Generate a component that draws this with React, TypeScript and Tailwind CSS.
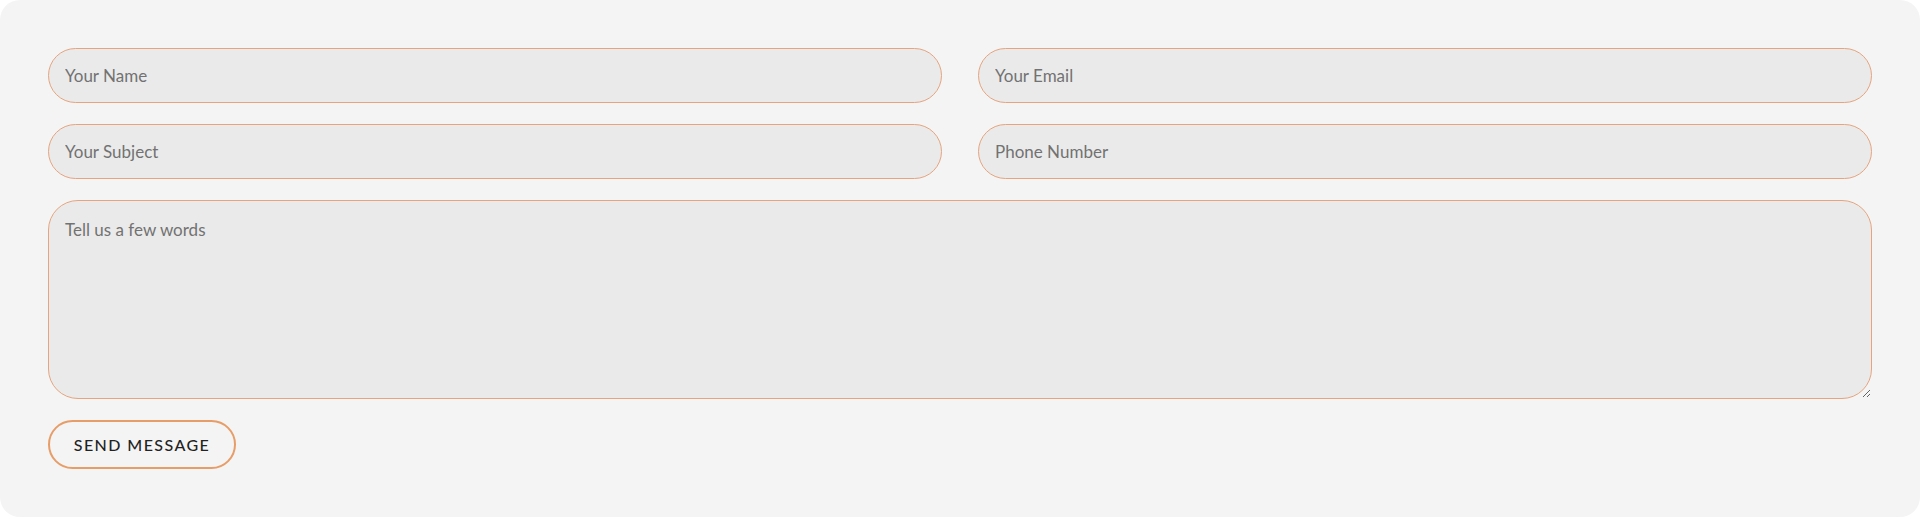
const fieldClass =
  'h-[55px] w-full rounded-full border border-[#e6a47e] bg-[#eaeaea] px-4 text-[17px] text-[#333] placeholder:text-[#727272] outline-none';

const App = () => {
  return (
    <div className="min-h-[517px] bg-white font-['Lato',sans-serif]">
      <div className="min-h-[517px] rounded-[20px] bg-[#f4f4f4] px-12 pt-12 pb-12">
        <form className="flex flex-col gap-[21px]" onSubmit={(e) => e.preventDefault()}>
          <div className="grid grid-cols-2 gap-x-9 gap-y-[21px]">
            <input type="text" placeholder="Your Name" className={fieldClass} />
            <input type="email" placeholder="Your Email" className={fieldClass} />
            <input type="text" placeholder="Your Subject" className={fieldClass} />
            <input type="tel" placeholder="Phone Number" className={fieldClass} />
          </div>
          <textarea
            placeholder="Tell us a few words"
            className="block h-[199px] w-full rounded-[30px] border border-[#e6a47e] bg-[#eaeaea] px-4 pt-[16px] text-[17px] text-[#333] placeholder:text-[#727272] outline-none"
          />
          <div>
            <button
              type="submit"
              className="h-[49px] w-[188px] rounded-full border-2 border-[#e79d68] bg-transparent text-[16px] font-medium uppercase tracking-[0.09em] text-[#222]"
            >
              Send Message
            </button>
          </div>
        </form>
      </div>
    </div>
  );
};

export default App;
